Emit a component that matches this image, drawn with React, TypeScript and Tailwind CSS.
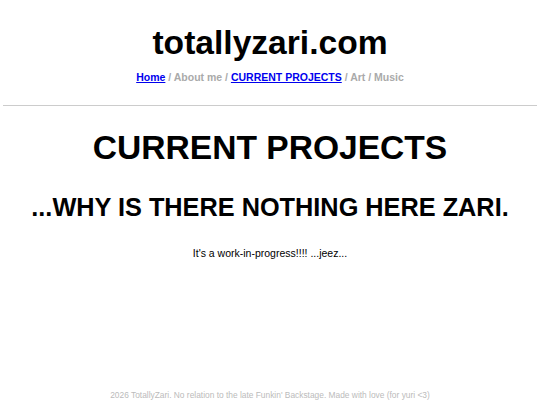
export default function App() {
  return (
    <div className="min-h-[405px] w-full bg-white text-black flex flex-col" style={{ fontFamily: '"Liberation Sans", Arial, sans-serif' }}>
      <header className="flex flex-col items-center pt-[23px]">
        <h1 className="text-[33.6px] font-bold leading-[40px]">totallyzari.com</h1>
        <nav className="mt-[7px] text-[10.5px] font-bold text-[#aaaaaa] leading-[14px]">
          <a className="text-[#0000ee] underline">Home</a> / About me / <a className="text-[#0000ee] underline">CURRENT PROJECTS</a> / Art / Music
        </nav>
      </header>
      <hr className="mx-[3px] mt-[21px] border-t border-[#cccccc]" />
      <main className="flex flex-col items-center">
        <h2 className="mt-[22px] text-[33.6px] font-bold leading-[40px]">CURRENT PROJECTS</h2>
        <h3 className="mt-[23px] text-[25.3px] font-bold leading-[32px]">...WHY IS THERE NOTHING HERE ZARI.</h3>
        <p className="mt-[23px] text-[10.5px] leading-[14px]">It's a work-in-progress!!!! ...jeez...</p>
      </main>
      <footer className="mt-auto pb-[5px] text-center text-[8.4px] text-[#bbbbbb] leading-[10px]">
        2026 TotallyZari. No relation to the late Funkin' Backstage. Made with love (for yuri &lt;3)
      </footer>
    </div>
  );
}
